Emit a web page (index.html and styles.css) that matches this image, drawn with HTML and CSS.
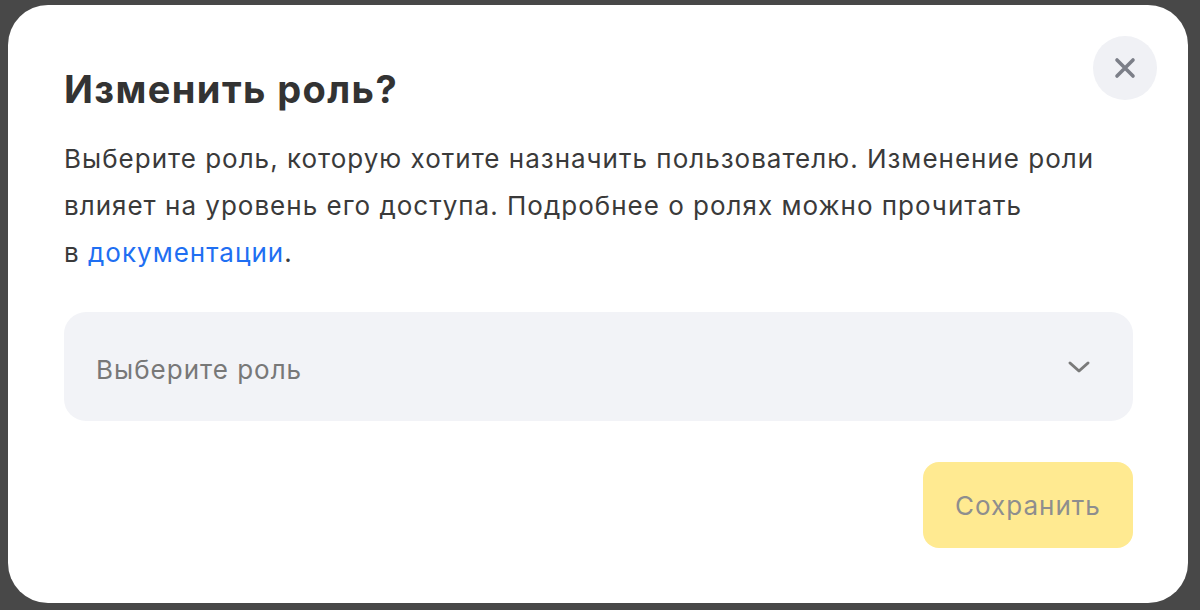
FILE: index.html
```html
<!DOCTYPE html>
<html lang="ru">
<head>
  <meta charset="UTF-8">
  <title>Изменить роль</title>
  <link rel="stylesheet" href="styles.css">
</head>
<body>
  <div class="overlay">
    <div class="modal">
      <button class="close-btn" aria-label="Закрыть">
        <svg width="22" height="22" viewBox="0 0 22 22">
          <path d="M3 3 L19 19 M19 3 L3 19" stroke="#7c7f88" stroke-width="3.6" stroke-linecap="round" fill="none"/>
        </svg>
      </button>

      <h1 class="title">Изменить роль?</h1>
      <p class="desc">
        Выберите роль, которую хотите назначить пользователю. Изменение роли<br>
        влияет на уровень его доступа. Подробнее о ролях можно прочитать<br>
        в <a href="#" class="link">документации</a>.
      </p>

      <div class="select">
        <span class="placeholder">Выберите роль</span>
        <svg class="chevron" width="24" height="14" viewBox="0 0 24 14">
          <path d="M3 3 L12 11 L21 3" stroke="#7a7a7a" stroke-width="3" stroke-linecap="round" stroke-linejoin="round" fill="none"/>
        </svg>
      </div>

      <div class="actions">
        <button class="save-btn" disabled>Сохранить</button>
      </div>
    </div>
  </div>
</body>
</html>
```

FILE: styles.css
```css
body {
  margin: 0;
  background: #484848;
  font-family: Inter, Roboto, "Liberation Sans", sans-serif;
}

.overlay {
  height: 610px;
  padding: 5px 12px 0 8px;
  box-sizing: border-box;
}

.modal {
  position: relative;
  background: #fff;
  border-radius: 40px;
  height: 598px;
  box-sizing: border-box;
  padding: 58px 55px 55px 56px;
  display: flex;
  flex-direction: column;
}

.close-btn {
  position: absolute;
  top: 31px;
  right: 31px;
  width: 64px;
  height: 64px;
  border-radius: 50%;
  border: none;
  background: #f0f1f5;
  display: flex;
  align-items: center;
  justify-content: center;
  padding: 0;
  cursor: pointer;
}

.title {
  margin: 0;
  font-size: 38px;
  line-height: 52px;
  font-weight: 700;
  letter-spacing: 1.4px;
  color: #333;
}

.desc {
  margin: 20px 0 0;
  font-size: 26px;
  line-height: 47px;
  letter-spacing: 1px;
  color: #3a3a3a;
}

.link {
  color: #1f6ff2;
  text-decoration: none;
}

.select {
  margin-top: 36px;
  height: 109px;
  box-sizing: border-box;
  background: #f2f3f7;
  border-radius: 22px;
  display: flex;
  align-items: center;
  justify-content: space-between;
  padding: 5px 42px 0 32px;
}

.placeholder {
  font-size: 26px;
  letter-spacing: 1px;
  color: #787878;
}

.chevron {
  margin-top: -5px;
}

.actions {
  margin-top: auto;
  display: flex;
  justify-content: flex-end;
}

.save-btn {
  width: 210px;
  height: 86px;
  border: none;
  border-radius: 16px;
  background: #ffea91;
  color: #8e8e8e;
  font-family: inherit;
  font-size: 26px;
  letter-spacing: 1px;
}
```
